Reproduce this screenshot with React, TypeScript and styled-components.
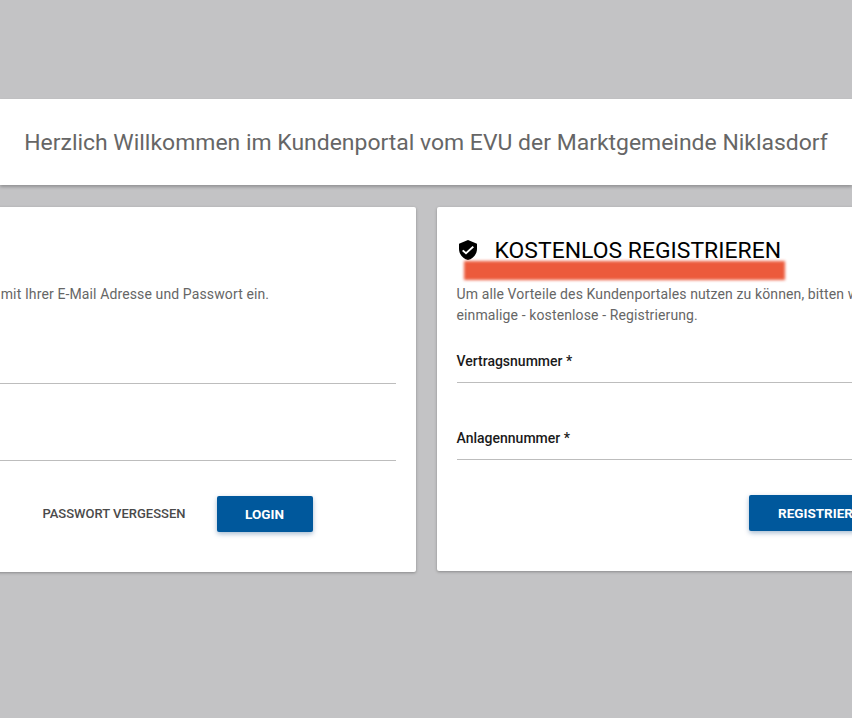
import React from "react";
import styled, { createGlobalStyle } from "styled-components";

const GlobalStyle = createGlobalStyle`
  html, body {
    margin: 0;
    padding: 0;
    height: 100%;
    overflow: hidden;
    background: #c3c3c5;
    font-family: Roboto, "Liberation Sans", sans-serif;
  }
`;

const Page = styled.div`
  height: 718px;
  padding-top: 99px;
  box-sizing: border-box;
  overflow: hidden;
  background: #c3c3c5;
`;

const Banner = styled.div`
  height: 86px;
  background: #fff;
  display: flex;
  align-items: center;
  justify-content: center;
  box-shadow: 0 2px 3px rgba(0, 0, 0, 0.25);
`;

const BannerTitle = styled.h1`
  margin: 0;
  font-size: 22.95px;
  font-weight: 400;
  color: #666;
  white-space: nowrap;
`;

const Cards = styled.div`
  display: flex;
  justify-content: center;
  gap: 21px;
  margin-top: 22px;
`;

const Card = styled.section<{ $tall?: boolean }>`
  flex: 0 0 571px;
  box-sizing: border-box;
  height: ${(p) => (p.$tall ? 365 : 364)}px;
  padding: 29px 20px 0;
  background: #fff;
  border-radius: 2px;
  box-shadow: 0 1px 3px rgba(0, 0, 0, 0.3);
`;

const CardHead = styled.div`
  position: relative;
  display: flex;
  align-items: center;
  gap: 18px;
  height: 28px;
  margin-bottom: 20px;
`;

const CardTitle = styled.h2`
  margin: 0;
  font-size: 22.95px;
  font-weight: 400;
  color: #000;
  white-space: nowrap;
`;

const Highlight = styled.div`
  position: absolute;
  left: 7px;
  top: 25px;
  width: 321px;
  height: 19px;
  background: #ec5a3c;
  filter: blur(1.5px);
`;

const Intro = styled.p<{ $tall?: boolean }>`
  margin: 0 0 ${(p) => (p.$tall ? 9 : 8)}px;
  font-size: 14px;
  letter-spacing: 0.12px;
  line-height: 21px;
  color: #666;
  white-space: nowrap;
`;

const Field = styled.div`
  height: 49px;
  margin-bottom: 28px;
  padding-top: 17px;
  box-sizing: border-box;
  border-bottom: 1px solid #bdbdbd;
`;

const FieldLabel = styled.label`
  display: block;
  font-size: 14px;
  font-weight: 500;
  line-height: 20px;
  color: #1a1a1a;
`;

const Actions = styled.div<{ $inset: number }>`
  display: flex;
  justify-content: flex-end;
  align-items: center;
  gap: 16px;
  margin-top: 35px;
  padding-right: ${(p) => p.$inset}px;
`;

const TextButton = styled.button`
  height: 36px;
  padding: 0 15px 1px;
  border: 0;
  background: none;
  font: 500 13px Roboto, sans-serif;
  color: #4a4a4a;
  text-transform: uppercase;
`;

const PrimaryButton = styled.button<{ $width: number }>`
  height: 36px;
  width: ${(p) => p.$width}px;
  padding: 0 0 1px;
  border: 0;
  border-radius: 2px;
  background: #00589c;
  color: #fff;
  font: 700 13.5px Roboto, sans-serif;
  text-transform: uppercase;
  box-shadow: 0 2px 5px rgba(0, 60, 120, 0.35);
`;

const ShieldIcon = styled.svg`
  flex: none;
  width: 18px;
  height: 20px;
  margin-left: 2px;
`;

const ShieldCheck = () => (
  <ShieldIcon viewBox="3 1 18 22" preserveAspectRatio="none">
    <path
      fill="#000"
      d="M12 1 3 5v6c0 5.55 3.84 10.74 9 12 5.16-1.26 9-6.45 9-12V5l-9-4zm-2 16-4-4 1.41-1.41L10 14.17l6.59-6.59L18 9l-8 8z"
    />
  </ShieldIcon>
);

export default function App() {
  return (
    <>
      <GlobalStyle />
      <Page>
        <Banner>
          <BannerTitle>Herzlich Willkommen im Kundenportal vom EVU der Marktgemeinde Niklasdorf</BannerTitle>
        </Banner>
        <Cards>
          <Card $tall>
            <CardHead>
              <ShieldCheck />
              <CardTitle>LOGIN</CardTitle>
            </CardHead>
            <Intro $tall>
              Bitte melden Sie sich mit Ihrer E-Mail Adresse und Passwort ein.
              <br />
              &nbsp;
            </Intro>
            <Field>
              <FieldLabel>E-Mail Adresse *</FieldLabel>
            </Field>
            <Field>
              <FieldLabel>Passwort *</FieldLabel>
            </Field>
            <Actions $inset={83}>
              <TextButton>Passwort vergessen</TextButton>
              <PrimaryButton $width={96}>Login</PrimaryButton>
            </Actions>
          </Card>
          <Card>
            <CardHead>
              <ShieldCheck />
              <CardTitle>KOSTENLOS REGISTRIEREN</CardTitle>
              <Highlight />
            </CardHead>
            <Intro>
              Um alle Vorteile des Kundenportales nutzen zu können, bitten wir Sie um eine
              <br />
              einmalige - kostenlose - Registrierung.
            </Intro>
            <Field>
              <FieldLabel>Vertragsnummer *</FieldLabel>
            </Field>
            <Field>
              <FieldLabel>Anlagennummer *</FieldLabel>
            </Field>
            <Actions $inset={88}>
              <PrimaryButton $width={151}>Registrieren</PrimaryButton>
            </Actions>
          </Card>
        </Cards>
      </Page>
    </>
  );
}
